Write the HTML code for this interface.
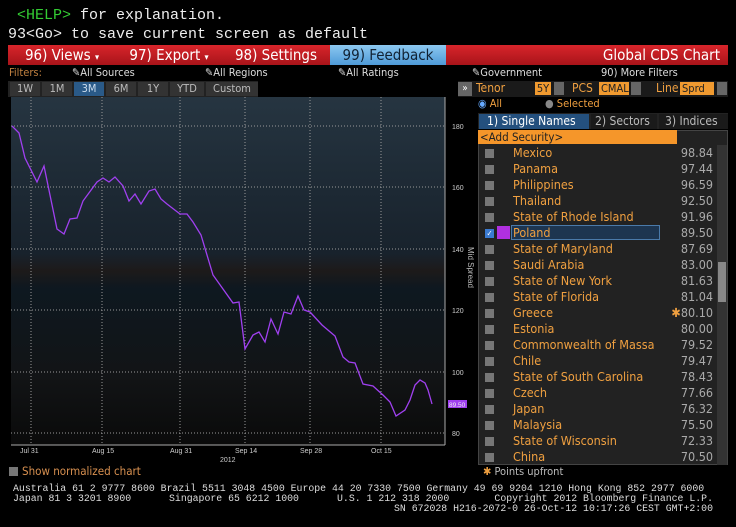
<!DOCTYPE html>
<html><head><meta charset="utf-8"><style>
*{margin:0;padding:0;box-sizing:border-box}
body{width:736px;height:527px;background:#000;position:relative;overflow:hidden;font-family:"Liberation Sans Narrow","DejaVu Sans Condensed","Liberation Sans",sans-serif;color:#ddd}
.a{position:absolute;white-space:nowrap}
.mono{font-family:"Liberation Mono",monospace;font-size:15px;color:#eee}
.tb{top:45px;height:20px;font-size:15px;color:#fff;line-height:20px;text-align:center}
.flt{font-size:11px;color:#ddd;top:66px}
.btn{top:82px;height:14px;background:#333;font-size:11px;color:#bbb;line-height:14px;text-align:center}
.row{position:absolute;left:479px;width:236px;height:16px;font-size:12.5px;line-height:16px;color:#f0a040}
.row .cb{position:absolute;left:6px;top:4px;width:9px;height:9px;background:#777}
.row .n{position:absolute;left:34px}
.row .v{position:absolute;right:2px;color:#aaa}
.ft{font-family:"Liberation Mono",monospace;font-size:9.85px;color:#ddd}
</style></head><body>
<div class="a mono" style="left:8px;top:7px"><span style="color:#3c3">&nbsp;&lt;HELP&gt;</span> for explanation.</div>
<div class="a mono" style="left:8px;top:26px">93&lt;Go&gt; to save current screen as default</div>
<div class="a" style="left:8px;top:45px;width:720px;height:20px;background:linear-gradient(#d8252b,#a8141a)"></div>
<div class="a tb" style="left:8px;width:108px">96) Views <span style="font-size:9px">▾</span></div>
<div class="a tb" style="left:116px;width:106px">97) Export <span style="font-size:9px">▾</span></div>
<div class="a tb" style="left:222px;width:108px">98) Settings</div>
<div class="a tb" style="left:330px;width:116px;background:linear-gradient(#8cc8f0,#4e9ad8);color:#123">99) Feedback</div>
<div class="a tb" style="left:590px;width:130px;text-align:right">Global CDS Chart</div>
<div class="a flt" style="left:9px;color:#c08040">Filters:</div>
<div class="a flt" style="left:72px">✎All Sources</div>
<div class="a flt" style="left:205px">✎All Regions</div>
<div class="a flt" style="left:338px">✎All Ratings</div>
<div class="a flt" style="left:472px">✎Government</div>
<div class="a flt" style="left:601px">90) More Filters</div>
<div class="a" style="left:8px;top:81px;width:250px;height:16px;background:#222"></div>
<div class="a btn" style="left:10px;width:30px">1W</div>
<div class="a btn" style="left:42px;width:30px">1M</div>
<div class="a btn" style="left:74px;width:30px;background:#2a5a88;color:#cde">3M</div>
<div class="a btn" style="left:106px;width:30px">6M</div>
<div class="a btn" style="left:138px;width:30px">1Y</div>
<div class="a btn" style="left:170px;width:34px">YTD</div>
<div class="a btn" style="left:206px;width:52px">Custom</div>
<div class="a" style="left:458px;top:81px;width:270px;height:16px;background:#1a1a1a"></div>
<div class="a" style="left:458px;top:82px;width:14px;height:14px;background:#666;color:#fff;font-size:10px;text-align:center;line-height:14px">»</div>
<div class="a" style="left:476px;top:81px;font-size:12px;color:#f0a040">Tenor</div>
<div class="a" style="left:535px;top:82px;width:16px;height:13px;background:#f09a30;color:#222;font-size:11px;text-align:center;line-height:13px">5Y</div>
<div class="a" style="left:554px;top:82px;width:10px;height:13px;background:#666"></div>
<div class="a" style="left:572px;top:81px;font-size:12px;color:#f0a040">PCS</div>
<div class="a" style="left:599px;top:82px;width:30px;height:13px;background:#f09a30;color:#222;font-size:11px;line-height:13px;padding-left:2px">CMAL</div>
<div class="a" style="left:631px;top:82px;width:10px;height:13px;background:#666"></div>
<div class="a" style="left:656px;top:81px;font-size:12px;color:#f0a040">Line</div>
<div class="a" style="left:680px;top:82px;width:34px;height:13px;background:#f09a30;color:#222;font-size:11px;line-height:13px;padding-left:2px">Sprd</div>
<div class="a" style="left:717px;top:82px;width:10px;height:13px;background:#666"></div>
<div class="a" style="left:478px;top:97px;font-size:11px;color:#f0a040"><span style="color:#6af">◉</span> All</div>
<div class="a" style="left:545px;top:97px;font-size:11px;color:#f0a040"><span style="color:#888">●</span> Selected</div>
<svg class="a" style="left:0;top:97px" width="478" height="370">
<defs><linearGradient id="g" x1="0" y1="0" x2="0" y2="1">
<stop offset="0" stop-color="#263541"/><stop offset="0.2" stop-color="#1f2c37"/><stop offset="0.45" stop-color="#18222c"/><stop offset="0.5" stop-color="#1d1a1a"/><stop offset="0.55" stop-color="#0e1820"/><stop offset="0.8" stop-color="#121416"/><stop offset="1" stop-color="#0a0a0a"/></linearGradient></defs>
<rect x="11" y="0" width="434" height="348" fill="url(#g)"/>
<g stroke="#999" stroke-dasharray="1,2" stroke-width="1">
<line x1="31" y1="0" x2="31" y2="348"/><line x1="102" y1="0" x2="102" y2="348"/><line x1="180" y1="0" x2="180" y2="348"/><line x1="245" y1="0" x2="245" y2="348"/><line x1="310" y1="0" x2="310" y2="348"/><line x1="381" y1="0" x2="381" y2="348"/>
<line x1="11" y1="29" x2="445" y2="29"/><line x1="11" y1="90" x2="445" y2="90"/><line x1="11" y1="152" x2="445" y2="152"/><line x1="11" y1="213" x2="445" y2="213"/><line x1="11" y1="275" x2="445" y2="275"/><line x1="11" y1="336" x2="445" y2="336"/>
</g>
<line x1="445" y1="0" x2="445" y2="348" stroke="#aaa"/>
<line x1="11" y1="348" x2="445" y2="348" stroke="#aaa"/>
<polyline fill="none" stroke="#a040f0" stroke-width="1.3" points="12,29 19,36 25,61 37,85 44,69 57,132 64,137 70,122 77,121 83,104 97,85 103,81 109,85 115,80 123,89 129,104 135,97 141,107 149,94 155,92 161,102 167,107 180,117 187,117 193,125 201,138 213,178 233,206 239,205 245,252 253,238 259,235 265,245 271,222 278,237 284,215 291,217 298,199 304,213 310,215 322,228 335,239 343,260 349,265 355,266 363,287 373,289 383,298 390,305 396,319 405,313 410,303 415,288 420,283 425,286 428,293 432,307"/>
<g fill="#ccc" font-size="7" font-family="Liberation Sans">
<text x="452" y="32">180</text><text x="452" y="93">160</text><text x="452" y="155">140</text><text x="452" y="216">120</text><text x="452" y="278">100</text><text x="452" y="339">80</text>
<text x="20" y="356">Jul 31</text><text x="92" y="356">Aug 15</text><text x="170" y="356">Aug 31</text><text x="235" y="356">Sep 14</text><text x="300" y="356">Sep 28</text><text x="371" y="356">Oct 15</text><text x="220" y="365">2012</text>
</g>
<text x="0" y="0" fill="#bbb" font-size="8" font-family="Liberation Sans" transform="translate(468,150) rotate(90)">Mid Spread</text>
<rect x="448" y="303" width="19" height="8" fill="#a040f0"/><text x="449" y="310" fill="#eee" font-size="6.5" font-family="Liberation Sans">89.50</text>
</svg>
<div class="a" style="left:478px;top:113px;width:250px;height:16px;background:#222"></div>
<div class="a" style="left:479px;top:114px;width:110px;height:15px;background:#24507e;color:#fff;font-size:12px;line-height:15px;padding-left:8px">1) Single Names</div>
<div class="a" style="left:591px;top:114px;width:66px;height:15px;background:#1a1a1a;color:#bbb;font-size:12px;line-height:15px;padding-left:4px">2) Sectors</div>
<div class="a" style="left:659px;top:114px;width:69px;height:15px;background:#1a1a1a;color:#bbb;font-size:12px;line-height:15px;padding-left:6px">3) Indices</div>
<div class="a" style="left:478px;top:130px;width:250px;height:335px;background:#222;border:1px solid #444"></div>
<div class="a" style="left:478px;top:130px;width:199px;height:14px;background:#f5962a;color:#222;font-size:11.5px;line-height:14px;padding-left:2px">&lt;Add Security&gt;</div>
<div class="a" style="left:717px;top:145px;width:10px;height:320px;background:#333"></div>
<div class="a" style="left:718px;top:262px;width:8px;height:40px;background:#888"></div>
<div class="a" style="left:511px;top:225px;width:149px;height:15px;background:#1d3550;border:1px solid #4a7aaa"></div>
<div class="a" style="left:497px;top:226px;width:13px;height:13px;background:#b030e0"></div>
<div class="row" style="top:145px"><div class="cb"></div><span class="n">Mexico</span><span class="v">98.84</span></div>
<div class="row" style="top:161px"><div class="cb"></div><span class="n">Panama</span><span class="v">97.44</span></div>
<div class="row" style="top:177px"><div class="cb"></div><span class="n">Philippines</span><span class="v">96.59</span></div>
<div class="row" style="top:193px"><div class="cb"></div><span class="n">Thailand</span><span class="v">92.50</span></div>
<div class="row" style="top:209px"><div class="cb"></div><span class="n">State of Rhode Island</span><span class="v">91.96</span></div>
<div class="row" style="top:225px"><div class="cb" style="background:#3a7ad0;color:#fff;font-size:8px;line-height:9px;text-align:center">✓</div><span class="n">Poland</span><span class="v">89.50</span></div>
<div class="row" style="top:241px"><div class="cb"></div><span class="n">State of Maryland</span><span class="v">87.69</span></div>
<div class="row" style="top:257px"><div class="cb"></div><span class="n">Saudi Arabia</span><span class="v">83.00</span></div>
<div class="row" style="top:273px"><div class="cb"></div><span class="n">State of New York</span><span class="v">81.63</span></div>
<div class="row" style="top:289px"><div class="cb"></div><span class="n">State of Florida</span><span class="v">81.04</span></div>
<div class="row" style="top:305px"><div class="cb"></div><span class="n">Greece</span><span class="v"><span style="color:#f0a040">✱</span>80.10</span></div>
<div class="row" style="top:321px"><div class="cb"></div><span class="n">Estonia</span><span class="v">80.00</span></div>
<div class="row" style="top:337px"><div class="cb"></div><span class="n">Commonwealth of Massa</span><span class="v">79.52</span></div>
<div class="row" style="top:353px"><div class="cb"></div><span class="n">Chile</span><span class="v">79.47</span></div>
<div class="row" style="top:369px"><div class="cb"></div><span class="n">State of South Carolina</span><span class="v">78.43</span></div>
<div class="row" style="top:385px"><div class="cb"></div><span class="n">Czech</span><span class="v">77.66</span></div>
<div class="row" style="top:401px"><div class="cb"></div><span class="n">Japan</span><span class="v">76.32</span></div>
<div class="row" style="top:417px"><div class="cb"></div><span class="n">Malaysia</span><span class="v">75.50</span></div>
<div class="row" style="top:433px"><div class="cb"></div><span class="n">State of Wisconsin</span><span class="v">72.33</span></div>
<div class="row" style="top:449px"><div class="cb"></div><span class="n">China</span><span class="v">70.50</span></div>
<div class="a" style="left:9px;top:467px;width:9px;height:9px;background:#777"></div>
<div class="a" style="left:22px;top:464px;font-size:11.5px;color:#d89050">Show normalized chart</div>
<div class="a" style="left:483px;top:465px;font-size:11px;color:#bbb"><span style="color:#f0a040">✱</span> Points upfront</div>
<div class="a ft" style="left:13px;top:483px">Australia 61 2 9777 8600 Brazil 5511 3048 4500 Europe 44 20 7330 7500 Germany 49 69 9204 1210 Hong Kong 852 2977 6000</div>
<div class="a ft" style="left:13px;top:493px;width:700px"><span>Japan 81 3 3201 8900</span><span style="position:absolute;left:156px">Singapore 65 6212 1000</span><span style="position:absolute;left:324px">U.S. 1 212 318 2000</span><span style="position:absolute;right:0">Copyright 2012 Bloomberg Finance L.P.</span></div>
<div class="a ft" style="right:23px;top:503px">SN 672028 H216-2072-0 26-Oct-12 10:17:26 CEST GMT+2:00</div>
</body></html>
